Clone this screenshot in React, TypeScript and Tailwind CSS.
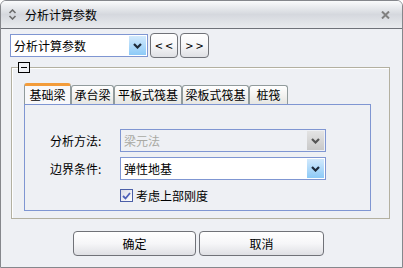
import React from "react";

const font = { fontFamily: '"Noto Sans CJK SC", "Noto Sans", sans-serif' };

const tabs = [
  { label: "基础梁", width: "w-[47px]" },
  { label: "承台梁", width: "w-[43px]" },
  { label: "平板式筏基", width: "w-[68px]" },
  { label: "梁板式筏基", width: "w-[67px]" },
  { label: "桩筏", width: "w-[39px]" },
];

function Chevron({ color = "#2b2b2b" }: { color?: string }) {
  return (
    <svg width="9" height="6" viewBox="0 0 9 6">
      <path d="M1 1 L4.5 4.5 L8 1" fill="none" stroke={color} strokeWidth="2.2" />
    </svg>
  );
}

function Combo({
  text,
  width,
  disabled = false,
}: {
  text: string;
  width: string;
  disabled?: boolean;
}) {
  return (
    <div
      className={`flex h-[23px] ${width} items-center border border-[#7f96d2] ${
        disabled ? "bg-[#eef0f4]" : "bg-white"
      }`}
    >
      <span
        className={`flex-1 pl-[3px] text-[12px] leading-none ${
          disabled ? "text-[#a9a9a3]" : "text-black"
        }`}
      >
        {text}
      </span>
      <div
        className={`mr-[1px] flex h-[19px] w-[17px] items-center justify-center ${
          disabled
            ? "bg-gradient-to-b from-[#e4e4e4] to-[#c8c8c8]"
            : "bg-gradient-to-b from-[#d2e9fc] to-[#8ccaf7]"
        }`}
      >
        <Chevron color={disabled ? "#555" : "#1e2a3a"} />
      </div>
    </div>
  );
}

function Button({ children, className }: { children: React.ReactNode; className: string }) {
  return (
    <div
      className={`flex h-[25px] items-center justify-center rounded-[4px] border border-[#707278] bg-gradient-to-b from-white via-[#f6f6f8] to-[#dfe0e4] text-[12px] text-black ${className}`}
    >
      {children}
    </div>
  );
}

export default function App() {
  return (
    <div
      style={font}
      className="flex h-[268px] w-[403px] flex-col overflow-hidden rounded-t-[6px] border border-[#85878c] bg-[#eef0f4] text-black"
    >
      {/* TITLE */}
      <div className="flex h-[28px] shrink-0 items-center border-b border-[#6f7279] bg-gradient-to-b from-[#fafbfc] via-[#d5d8de] to-[#e9ebee] pr-[12px]">
        <svg width="9" height="11" viewBox="0 0 9 11" className="ml-[7px]">
          <path d="M1.5 4 L4.5 1 L7.5 4" fill="none" stroke="#6d6d6d" strokeWidth="1.6" />
          <path d="M1.5 7 L4.5 10 L7.5 7" fill="none" stroke="#6d6d6d" strokeWidth="1.6" />
        </svg>
        <span className="ml-[8px] text-[12px] leading-none text-black">分析计算参数</span>
        <svg width="9" height="8" viewBox="0 0 9 8" className="ml-auto">
          <path d="M1 0.5 L8 7.5 M8 0.5 L1 7.5" stroke="#808080" strokeWidth="2" />
        </svg>
      </div>

      {/* TOP ROW */}
      <div className="mt-[4px] flex h-[25px] items-center pl-[9px]">
        <Combo text="分析计算参数" width="w-[138px]" />
        <Button className="ml-[2px] w-[28px] pl-[3px] text-[13px] tracking-[3px]">&lt;&lt;</Button>
        <Button className="ml-[2px] w-[29px] pl-[3px] text-[13px] tracking-[3px]">&gt;&gt;</Button>
      </div>

      {/* GROUP */}
      <div className="relative ml-[10px] mt-[9px] h-[152px] w-[379px] border border-[#b3b0a0] pl-[12px] pt-[16px] shadow-[inset_1px_1px_0_#ffffff]">
        <div className="absolute left-[6px] top-[-6px] flex h-[11px] w-[12px] items-center justify-center border border-black bg-[#eef0f4]">
          <div className="h-[1px] w-[6px] bg-black" />
        </div>

        {/* TABS */}
        <div className="flex h-[20px] items-end">
          {tabs.map((tab, i) =>
            i === 0 ? (
              <div
                key={tab.label}
                className={`relative z-10 flex h-[21px] ${tab.width} items-start justify-center rounded-t-[3px] border-x border-t-[3px] border-x-[#919b9c] border-t-[#f39c3a] bg-[#f8f8fa] pt-[1px] text-[12px] leading-[15px]`}
              >
                {tab.label}
              </div>
            ) : (
              <div
                key={tab.label}
                className={`flex h-[19px] ${tab.width} items-center justify-center rounded-t-[3px] border-x border-t border-[#919b9c] bg-gradient-to-b from-white to-[#e6e6e2] text-[12px] leading-none`}
              >
                {tab.label}
              </div>
            )
          )}
        </div>

        {/* PANEL */}
        <div className="h-[107px] w-[347px] border border-[#7f96d2] bg-[#eef0f4] pl-[25px] pt-[24px]">
          <div className="flex items-center">
            <span className="w-[70px] text-[12px] leading-none">分析方法:</span>
            <Combo text="梁元法" width="w-[206px]" disabled />
          </div>
          <div className="mt-[5px] flex items-center">
            <span className="w-[70px] text-[12px] leading-none">边界条件:</span>
            <Combo text="弹性地基" width="w-[206px]" />
          </div>
          <div className="ml-[70px] mt-[9px] flex items-center">
            <div className="flex h-[13px] w-[13px] items-center justify-center border border-[#4b5fa8] bg-gradient-to-br from-[#dcdce6] to-white">
              <svg width="9" height="8" viewBox="0 0 9 8">
                <path d="M1 4 L3.5 6.5 L8 1" fill="none" stroke="#4f60b8" strokeWidth="1.8" />
              </svg>
            </div>
            <span className="ml-[3px] text-[12px] leading-none">考虑上部刚度</span>
          </div>
        </div>
      </div>

      {/* BOTTOM BUTTONS */}
      <div className="mt-[12px] flex pl-[72px]">
        <Button className="w-[123px]">确定</Button>
        <Button className="ml-[3px] w-[125px]">取消</Button>
      </div>
    </div>
  );
}
